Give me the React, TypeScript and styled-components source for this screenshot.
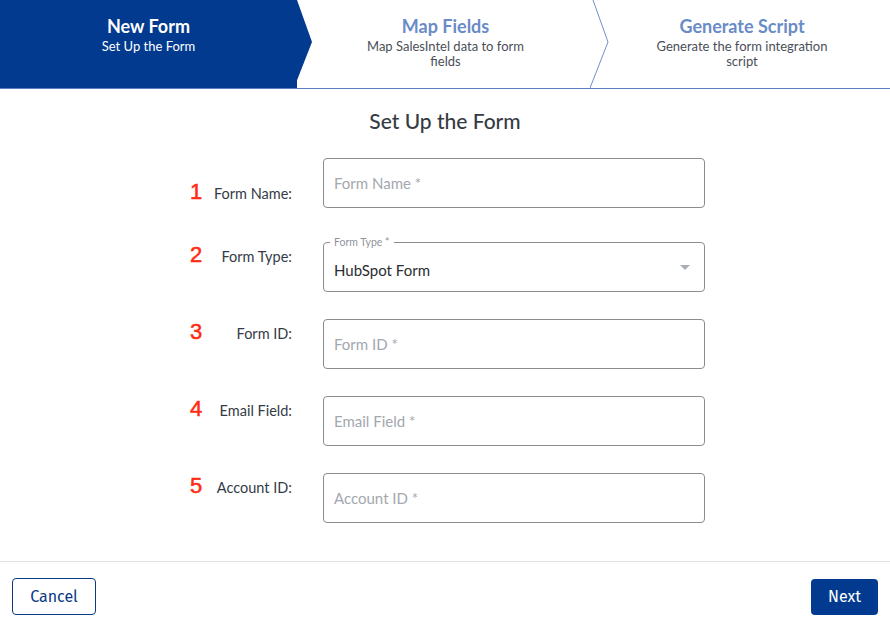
import { createGlobalStyle } from 'styled-components';
import styled from 'styled-components';

interface Step {
   title: string;
   subtitle: string;
}

interface Field {
   num: string;
   label: string;
   placeholder: string;
   labelTop: number;
   select?: boolean;
   value?: string;
}

const steps: Step[] = [
   { title: 'New Form', subtitle: 'Set Up the Form' },
   { title: 'Map Fields', subtitle: 'Map SalesIntel data to form fields' },
   {
      title: 'Generate Script',
      subtitle: 'Generate the form integration script',
   },
];

const fields: Field[] = [
   { num: '1', label: 'Form Name:', placeholder: 'Form Name *', labelTop: 21 },
   {
      num: '2',
      label: 'Form Type:',
      placeholder: 'Form Type *',
      labelTop: 0,
      select: true,
      value: 'HubSpot Form',
   },
   { num: '3', label: 'Form ID:', placeholder: 'Form ID *', labelTop: 0 },
   { num: '4', label: 'Email Field:', placeholder: 'Email Field *', labelTop: 0 },
   { num: '5', label: 'Account ID:', placeholder: 'Account ID *', labelTop: 0 },
];

const App = () => {
   return (
      <>
         <GlobalStyle />
         <Page>
            <Stepper>
               {steps.map((step, index) => (
                  <StepItem key={step.title} active={index === 0}>
                     <StepTitle active={index === 0}>{step.title}</StepTitle>
                     <StepSubtitle active={index === 0}>
                        {step.subtitle}
                     </StepSubtitle>
                     {index < steps.length - 1 && (
                        <Chevron viewBox='0 0 22 88' width='22' height='88'>
                           {index === 0 ? (
                              <polygon
                                 points='0,0 4,0 19,42 1,88 0,88'
                                 fill='#013a8e'
                              />
                           ) : (
                              <polyline
                                 points='3,0 18,42 0,88'
                                 fill='none'
                                 stroke='#6f8fca'
                                 strokeWidth='1'
                              />
                           )}
                        </Chevron>
                     )}
                  </StepItem>
               ))}
            </Stepper>

            <Content>
               <Heading>Set Up the Form</Heading>
               <FormGrid>
                  {fields.map((field, index) => (
                     <Row key={field.num} first={index === 0}>
                        <LabelCell top={field.labelTop}>
                           <Number>{field.num}</Number>
                           <Label>{field.label}</Label>
                        </LabelCell>
                        {field.select ? (
                           <SelectBox>
                              <Legend>{field.placeholder}</Legend>
                              <SelectValue>{field.value}</SelectValue>
                              <Caret />
                           </SelectBox>
                        ) : (
                           <Input placeholder={field.placeholder} />
                        )}
                     </Row>
                  ))}
               </FormGrid>
            </Content>

            <Footer>
               <CancelButton>Cancel</CancelButton>
               <NextButton>Next</NextButton>
            </Footer>
         </Page>
      </>
   );
};

const GlobalStyle = createGlobalStyle`
   html, body {
      margin: 0;
      padding: 0;
      background: #fff;
   }
   body {
      font-family: 'Lato', 'Noto Sans', sans-serif;
   }
   * {
      box-sizing: border-box;
   }
`;

const Page = styled.div`
   width: 890px;
   height: 631px;
   display: flex;
   flex-direction: column;
   background: #fff;
   overflow: hidden;
`;

const Stepper = styled.div`
   display: grid;
   grid-template-columns: 297px 297px 1fr;
   height: 89px;
   border-bottom: 1px solid #5b7fc1;
`;

const StepItem = styled.div<{ active: boolean }>`
   position: relative;
   display: flex;
   flex-direction: column;
   align-items: center;
   padding-top: 14px;
   background: ${({ active }) => (active ? '#013a8e' : '#fff')};
`;

const StepTitle = styled.span<{ active: boolean }>`
   font-size: 18px;
   font-weight: 700;
   line-height: 24px;
   color: ${({ active }) => (active ? '#fff' : '#6a8bc6')};
`;

const StepSubtitle = styled.span<{ active: boolean }>`
   max-width: 190px;
   text-align: center;
   font-size: 13px;
   line-height: 15px;
   margin-top: 1px;
   color: ${({ active }) => (active ? '#fff' : '#4a4f57')};
`;

const Chevron = styled.svg`
   position: absolute;
   top: 0;
   right: -18px;
   z-index: 1;
`;

const Content = styled.div`
   flex: 1;
   display: flex;
   flex-direction: column;
   align-items: center;
   padding-top: 20px;
   border-bottom: 1px solid #e2e2e2;
`;

const Heading = styled.h2`
   margin: 0;
   font-size: 21px;
   font-weight: 500;
   line-height: 24px;
   color: #363b43;
`;

const FormGrid = styled.div`
   display: flex;
   flex-direction: column;
   gap: 27px;
   margin-top: 25px;
   margin-left: 5px;
`;

const Row = styled.div<{ first: boolean }>`
   display: flex;
   gap: 31px;
   margin-bottom: ${({ first }) => (first ? '7px' : '0')};
`;

const LabelCell = styled.div<{ top: number }>`
   width: 102px;
   height: 26px;
   display: flex;
   justify-content: space-between;
   align-items: baseline;
   margin-top: ${({ top }) => top}px;
`;

const Number = styled.span`
   font-family: 'Liberation Sans', Arial, sans-serif;
   font-size: 22px;
   line-height: 26px;
   color: #ff2a12;
   -webkit-text-stroke: 0.5px #ff2a12;
`;

const Label = styled.span`
   font-size: 14.5px;
   line-height: 26px;
   color: #353b46;
`;

const Input = styled.input`
   width: 382px;
   height: 50px;
   border: 1px solid #8c8c8c;
   border-radius: 4px;
   padding: 0 10px;
   font-family: inherit;
   font-size: 15px;
   color: #222;
   outline: none;

   &::placeholder {
      color: #a3a7ae;
   }
`;

const SelectBox = styled.div`
   position: relative;
   width: 382px;
   height: 50px;
   border: 1px solid #8c8c8c;
   border-radius: 4px;
   display: flex;
   align-items: center;
   padding: 5px 10px 0;
`;

const Legend = styled.span`
   position: absolute;
   top: -7px;
   left: 6px;
   padding: 0 4px;
   background: #fff;
   font-size: 10.5px;
   line-height: 12px;
   color: #8f949b;
`;

const SelectValue = styled.span`
   font-size: 15px;
   color: #2a2d33;
`;

const Caret = styled.span`
   position: absolute;
   right: 14px;
   top: 22px;
   width: 0;
   height: 0;
   border-left: 5px solid transparent;
   border-right: 5px solid transparent;
   border-top: 5px solid #a9aeb6;
`;

const Footer = styled.div`
   height: 69px;
   display: flex;
   justify-content: space-between;
   align-items: center;
   padding: 0 12px 0 12px;
`;

const Button = styled.button`
   height: 37px;
   border-radius: 4px;
   font-family: 'Fira Sans', 'Noto Sans', sans-serif;
   font-size: 16px;
   cursor: pointer;
`;

const CancelButton = styled(Button)`
   width: 84px;
   background: #fff;
   border: 1px solid #0b3a86;
   color: #0b3a86;
`;

const NextButton = styled(Button)`
   width: 67px;
   height: 36px;
   background: #013a8e;
   border: none;
   color: #fff;
`;

export default App;
